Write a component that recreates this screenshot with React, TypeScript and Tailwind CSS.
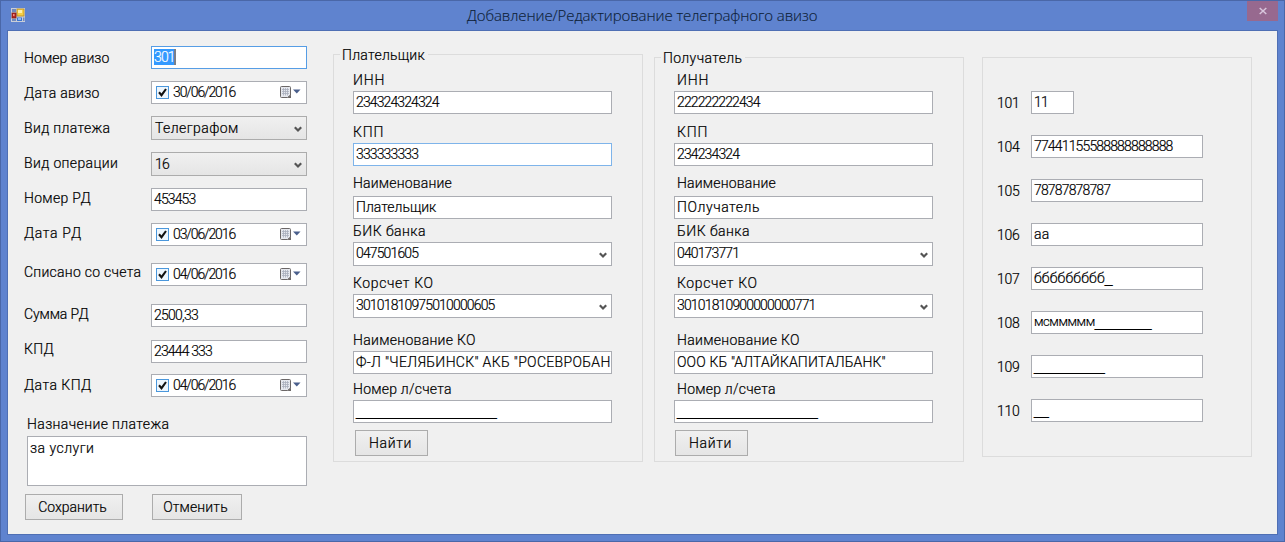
import type { ReactNode } from "react";

const text =
  "whitespace-pre font-['Roboto','Liberation_Sans',sans-serif] text-sm leading-4 font-light text-black [-webkit-text-stroke:0.2px]";

function Chevron({ className }: { className: string }) {
  return (
    <svg className={`shrink-0 ${className}`} width="8" height="7" viewBox="0 0 8 7" fill="none">
      <path d="M0.8 1.2 4 4.5 7.2 1.2" stroke="#555" strokeWidth="2.2" />
    </svg>
  );
}

function Blank({ count }: { count: number }) {
  return (
    <span className="font-['Liberation_Sans'] tracking-[-0.79px] font-normal [-webkit-text-stroke:0.2px]">
      {"_".repeat(count)}
    </span>
  );
}

function Label({ children, className }: { children: ReactNode; className: string }) {
  return <div className={`${text} ${className}`}>{children}</div>;
}

function Box({ children, className = "" }: { children?: ReactNode; className?: string }) {
  return (
    <div className={`flex h-[23px] overflow-hidden border bg-white pt-0.5 pl-[2px] ${text} ${className || "border-[#abadb3]"}`}>
      {children}
    </div>
  );
}

function DateBox({ value }: { value: string }) {
  return (
    <div className="flex h-[23px] items-start border border-[#abadb3] bg-white pl-1">
      <svg className="mt-1 shrink-0" width="13" height="13" viewBox="0 0 13 13">
        <rect x="0.5" y="0.5" width="12" height="12" fill="#eef6fd" stroke="#4a97dc" />
        <path d="M3 6.3 5.5 9.2 10 3" fill="none" stroke="#111" strokeWidth="2.1" />
      </svg>
      <div className={`mt-0.5 ml-1 grow tracking-[-1.12px] ${text}`}>{value}</div>
      <svg className="mt-1 mr-[5px] shrink-0" width="21" height="13" viewBox="0 0 21 13">
        <path d="M1.5 0.5h8q1 0 1 1v7.500l-3 2.500h-6q-1 0-1-1v-9q0-1 1-1z" fill="#e6e8ee" stroke="#6b6767" />
        <path d="M2 3.500h7M2 5.500h7M2 7.500h7M3.500 2v7.500M5.500 2v7.500M7.500 2v7.500" stroke="#a9aebd" strokeWidth="0.800" />
        <path d="M7.500 12 11 8.500v3.500z" fill="#6b6767" />
        <path d="M13 3.500h7.500L16.750 7.500z" fill="#4a5f8c" />
      </svg>
    </div>
  );
}

function Select({ children }: { children: ReactNode }) {
  return (
    <div className="flex h-6 items-start border border-[#acacac] bg-linear-to-b from-[#f0f0f0] to-[#e5e5e5] pt-[3px] pr-1 pl-[3px]">
      <div className={`grow ${text}`}>{children}</div>
      <Chevron className="mt-[6px]" />
    </div>
  );
}

function Combo({ children }: { children: ReactNode }) {
  return (
    <div className="flex h-6 items-start border border-[#abadb3] bg-white pt-0.5 pr-1 pl-[2px]">
      <div className={`grow ${text}`}>{children}</div>
      <Chevron className="mt-[7px]" />
    </div>
  );
}

function Row({ label, height, top, children }: { label: ReactNode; height: string; top: string; children: ReactNode }) {
  return (
    <div className={`flex items-start ${height}`}>
      <div className={`w-[127px] shrink-0 ${top} ${text}`}>{label}</div>
      <div className="w-[156px]">{children}</div>
    </div>
  );
}

function Button({ children, className }: { children: ReactNode; className: string }) {
  return (
    <button
      className={`flex h-[26px] justify-center border border-[#acacac] bg-linear-to-b from-[#f0f0f0] to-[#e5e5e5] pt-1 ${text} ${className}`}
    >
      {children}
    </button>
  );
}

interface PartyProps {
  indent: string;
  inn: string;
  kpp: string;
  kppBorder?: string;
  name: ReactNode;
  bik: string;
  account: string;
  bank: ReactNode;
}

function PartyFields({ indent, inn, kpp, kppBorder, name, bik, account, bank }: PartyProps) {
  return (
    <div className="w-[259px]">
      <Label className={`h-[19px] tracking-[0.82px] ${indent}`}>ИНН</Label>
      <Box><span className="tracking-[-0.88px]">{inn}</span></Box>
      <Label className={`mt-[10px] h-[19px] tracking-[0.82px] ${indent}`}>КПП</Label>
      <Box className={kppBorder}><span className="tracking-[-0.86px]">{kpp}</span></Box>
      <Label className={`mt-[9px] h-[21px] tracking-[0.18px] ${indent}`}>Наименование</Label>
      <Box>{name}</Box>
      <Label className={`mt-1 h-[19px] tracking-[0.45px] ${indent}`}>БИК банка</Label>
      <Combo><span className="tracking-[-0.86px]">{bik}</span></Combo>
      <Label className={`mt-[9px] h-[19px] tracking-[0.61px] ${indent}`}>Корсчет КО</Label>
      <Combo><span className="tracking-[-0.84px]">{account}</span></Combo>
      <Label className={`mt-[14px] h-[19px] tracking-[0.29px] ${indent}`}>Наименование КО</Label>
      <Box>{bank}</Box>
      <Label className={`mt-[7px] h-[19px] tracking-[0.23px] ${indent}`}>Номер л/счета</Label>
      <Box><Blank count={20} /></Box>
    </div>
  );
}

const codes: { code: string; value: ReactNode; width: string }[] = [
  { code: "101", value: <span className="tracking-[-0.88px]">11</span>, width: "w-[43px]" },
  { code: "104", value: <span className="tracking-[-0.84px]">77441155588888888888</span>, width: "w-[172px]" },
  { code: "105", value: <span className="tracking-[-0.84px]">78787878787</span>, width: "w-[172px]" },
  { code: "106", value: <span className="tracking-[0.3px]">аа</span>, width: "w-[172px]" },
  { code: "107", value: <><span className="tracking-[0.16px]">ббббббббб</span><Blank count={1} /></>, width: "w-[172px]" },
  { code: "108", value: <><span className="text-[13px] tracking-[-0.43px]">мсммммм</span><Blank count={8} /></>, width: "w-[172px]" },
  { code: "109", value: <Blank count={10} />, width: "w-[172px]" },
  { code: "110", value: <Blank count={2} />, width: "w-[172px]" },
];

export default function App() {
  return (
    <div className="flex h-[542px] w-[1285px] flex-col overflow-hidden border border-[#4a67a8] bg-[#5f83cf]">
      <header className="flex h-[29px] shrink-0 items-start">
        <svg className="mt-[7px] ml-[10px]" width="14" height="14" viewBox="0 0 14 14">
          <rect width="14" height="14" fill="#c9ced8" />
          <rect x="1" y="1" width="4" height="3" fill="#7189bd" />
          <rect x="6" y="1" width="7" height="7" fill="#f6cf45" stroke="#b98a1c" strokeWidth="0.800" />
          <rect x="7" y="2" width="4" height="3" fill="#fff0a8" />
          <rect x="1" y="5" width="4" height="5" fill="#b92a24" stroke="#7e1713" strokeWidth="0.800" />
          <rect x="2" y="6" width="1.500" height="2" fill="#ee8d85" />
          <rect x="1" y="11" width="4" height="2" fill="#7189bd" />
          <rect x="6" y="9.500" width="5" height="3.500" fill="#3b74cf" />
          <rect x="7" y="10" width="3" height="2" fill="#8db8f2" />
          <rect x="12" y="9.500" width="1.500" height="3.500" fill="#7189bd" />
        </svg>
        <h1 className="mt-1 ml-[442px] grow font-['Open_Sans','Noto_Sans',sans-serif] text-[15px] leading-5 font-light tracking-[-0.09px] whitespace-pre text-[#0e1f38] [-webkit-text-stroke:0.15px]">
          Добавление/Редактирование телеграфного авизо
        </h1>
        <button className="mr-1.5 flex h-5 w-[31px] items-center justify-center bg-[#97698f]">
          <svg width="8" height="8" viewBox="0 0 8 8">
            <path d="M0.700 1 7.300 7M7.300 1 0.700 7" stroke="#d8c6dc" strokeWidth="1.500" />
          </svg>
        </button>
      </header>

      <main className="mx-1.5 mb-1.5 flex grow items-start border border-[#4f6fb4] bg-[#f0f0f0]">
        <section className="ml-4 mt-[15px] w-[309px]">
          <Row label={<span className="tracking-[0.08px]">Номер авизо</span>} height="h-[35px]" top="pt-1">
            <Box className="border-[#569de5]">
              <span className="flex h-4 w-[20px] bg-[#3399ff] tracking-[-0.88px] text-white">301</span>
              <span className="h-4 w-0.5 bg-[#7b7f88]" />
            </Box>
          </Row>
          <Row label={<span className="tracking-[0.24px]">Дата авизо</span>} height="h-[35px]" top="pt-1">
            <DateBox value="30/06/2016" />
          </Row>
          <Row label={<span className="tracking-[0.34px]">Вид платежа</span>} height="h-9" top="pt-1">
            <Select><span className="tracking-[0.42px]">Телеграфом</span></Select>
          </Row>
          <Row label={<span className="tracking-[0.37px]">Вид операции</span>} height="h-9" top="pt-[3px]">
            <Select><span className="tracking-[-0.88px]">16</span></Select>
          </Row>
          <Row label={<span className="tracking-[0.3px]">Номер РД</span>} height="h-[35px]" top="pt-0.5">
            <Box><span className="tracking-[-0.88px]">453453</span></Box>
          </Row>
          <Row label={<span className="tracking-[0.66px]">Дата РД</span>} height="h-10" top="pt-0.5">
            <DateBox value="03/06/2016" />
          </Row>
          <Row label={<span className="tracking-[0.26px]">Списано со счета</span>} height="h-[41px]" top="pt-[1px]">
            <DateBox value="04/06/2016" />
          </Row>
          <Row label={<span className="tracking-[-0.1px]">Сумма РД</span>} height="h-9" top="pt-0.5">
            <Box><span className="tracking-[-0.75px]">2500,33</span></Box>
          </Row>
          <Row label={<span className="tracking-[0.32px]">КПД</span>} height="h-[34px]" top="pt-[1px]">
            <Box><span className="tracking-[-0.85px]">23444 333</span></Box>
          </Row>
          <Row label={<span className="tracking-[0.45px]">Дата КПД</span>} height="h-[42px]" top="pt-[3px]">
            <DateBox value="04/06/2016" />
          </Row>
          <Label className="ml-[3px] h-5 tracking-[0.37px]">Назначение платежа</Label>
          <div className={`ml-[3px] h-[50px] w-[280px] border border-[#abadb3] bg-white pt-[3px] pl-[2px] tracking-[0.47px] ${text}`}>
            за услуги
          </div>
          <div className="mt-2 ml-[1px] flex gap-[29px]">
            <Button className="w-[98px] pr-[3px] tracking-[-0.04px]">Сохранить</Button>
            <Button className="w-[90px] pr-[3px] tracking-[0.14px]">Отменить</Button>
          </div>
        </section>

        <fieldset className="mt-[14px] h-[417px] w-[310px] shrink-0 border border-[#dcdcdc] pl-[19px]">
          <legend className={`-ml-[13px] pt-0.5 pr-[3px] pl-[2px] tracking-[0.27px] ${text}`}>Плательщик</legend>
          <div className="mt-[9px]">
            <PartyFields
              indent="ml-0"
              inn="234324324324"
              kpp="333333333"
              kppBorder="border-[#7eb4ea]"
              name={<span className="tracking-[0px]">Плательщик</span>}
              bik="047501605"
              account="30101810975010000605"
              bank={<span className="tracking-[0.32px]">Ф-Л "ЧЕЛЯБИНСК" АКБ "РОСЕВРОБАН</span>}
            />
          </div>
          <Button className="mt-[7px] ml-0.5 w-[73px] pr-[2px] tracking-[0.64px]">Найти</Button>
        </fieldset>

        <fieldset className="mt-[17px] ml-[11px] h-[414px] w-[310px] shrink-0 border border-[#dcdcdc] pl-[19px]">
          <legend className={`-ml-[13px] pt-0.5 pr-[3px] pl-[2px] tracking-[0.36px] ${text}`}>Получатель</legend>
          <div className="mt-[6px]">
            <PartyFields
              indent="ml-[3px]"
              inn="222222222434"
              kpp="234234324"
              name={<span className="tracking-[0.55px]">ПОлучатель</span>}
              bik="040173771"
              account="30101810900000000771"
              bank={<span className="tracking-[0.13px]">ООО КБ "АЛТАЙКАПИТАЛБАНК"</span>}
            />
          </div>
          <Button className="mt-[7px] ml-[1px] w-[73px] pr-[2px] tracking-[0.64px]">Найти</Button>
        </fieldset>

        <section className="mt-[26px] ml-[18px] flex h-[400px] w-[270px] shrink-0 flex-col gap-[21px] border border-[#dcdcdc] pt-[33px] pl-[14px]">
          {codes.map(({ code, value, width }) => (
            <div key={code} className="flex items-start">
              <div className={`w-[34px] pt-1 tracking-[-0.27px] ${text}`}>{code}</div>
              <div className={width}><Box>{value}</Box></div>
            </div>
          ))}
        </section>
      </main>
    </div>
  );
}
